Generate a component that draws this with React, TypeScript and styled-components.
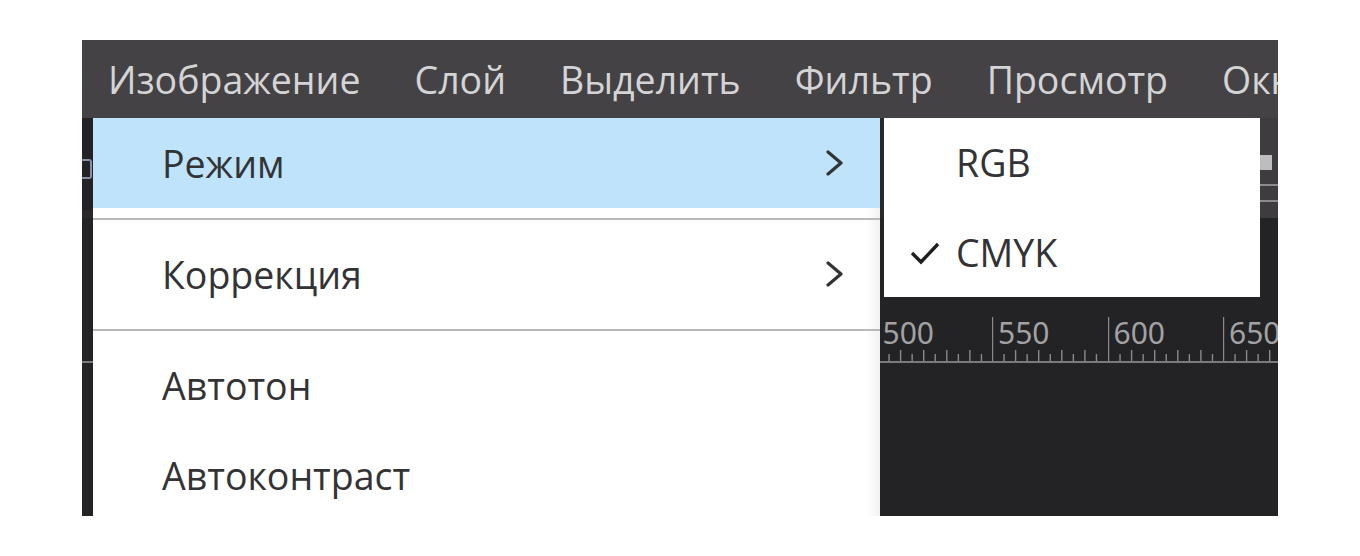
import React from 'react';
import styled, { createGlobalStyle } from 'styled-components';

const GlobalStyle = createGlobalStyle`
	html, body {
		margin: 0;
		padding: 0;
		background: #ffffff;
	}
	body {
		font-family: 'Open Sans', 'Noto Sans', sans-serif;
	}
`;

const menuBarItems = ['Изображение', 'Слой', 'Выделить', 'Фильтр', 'Просмотр', 'Окно'];

// Only the part of the ruler right of the open menu is visible
const rulerValues = [500, 550, 600, 650];
const RULER_STEP = 115.5;
const RULER_ORIGIN = 794.5;

const Chevron = () => (
	<svg width="20" height="26" viewBox="0 0 20 26" fill="none">
		<polyline points="3,2 16,13 3,24" stroke="#333" strokeWidth="3.2" strokeLinecap="round" strokeLinejoin="round" />
	</svg>
);

const Check = () => (
	<svg width="30" height="24" viewBox="0 0 30 24" fill="none">
		<polyline points="2,12 11,21 28,3" stroke="#1e1e1e" strokeWidth="3.4" strokeLinejoin="miter" />
	</svg>
);

const RulerTicks = () => (
	<svg width={RULER_STEP} height="44" viewBox={`0 0 ${RULER_STEP} 44`}>
		<line x1="0.5" y1="0" x2="0.5" y2="44" stroke="#8a8a8c" strokeWidth="1.4" />
		{Array.from({ length: 9 }).map((_, i) => {
			const x = (i + 1) * (RULER_STEP / 10) + 0.5;
			const h = i % 2 === 0 ? 7 : 11;
			return <line key={i} x1={x} y1={44 - h} x2={x} y2="44" stroke="#8a8a8c" strokeWidth="1.4" />;
		})}
	</svg>
);

const App = () => {
	return (
		<>
			<GlobalStyle />
			<Window>
				<MenuBar>
					{menuBarItems.map((item) => (
						<MenuBarItem key={item}>{item}</MenuBarItem>
					))}
				</MenuBar>

				<Toolbar>
					<ToolStrip>
						<ToolIcon />
					</ToolStrip>
					<ToolOptions>
						<OptionSwatch />
						<OptionLine />
						<OptionLine />
					</ToolOptions>
				</Toolbar>

				<RulerRow>
					{rulerValues.map((value) => (
						<RulerSegment key={value}>
							<RulerLabel>{value}</RulerLabel>
							<RulerTicks />
						</RulerSegment>
					))}
				</RulerRow>

				<Dropdown>
					<MenuItem $active>
						<span>Режим</span>
						<Chevron />
					</MenuItem>
					<Separator />
					<MenuItem>
						<span>Коррекция</span>
						<Chevron />
					</MenuItem>
					<Separator />
					<MenuItem>
						<span>Автотон</span>
					</MenuItem>
					<MenuItem>
						<span>Автоконтраст</span>
					</MenuItem>
				</Dropdown>

				<SubMenu>
					<SubMenuItem>
						<CheckSlot />
						<span>RGB</span>
					</SubMenuItem>
					<SubMenuItem>
						<CheckSlot>
							<Check />
						</CheckSlot>
						<span>CMYK</span>
					</SubMenuItem>
				</SubMenu>
			</Window>
		</>
	);
};

export default App;

const Window = styled.div`
	position: relative;
	margin: 40px 0 0 82px;
	width: 1196px;
	height: 476px;
	background: #232225;
	overflow: hidden;
	display: flex;
	flex-direction: column;
`;

const MenuBar = styled.div`
	display: flex;
	align-items: center;
	gap: 54px;
	height: 78px;
	padding-left: 26px;
	background: #444244;
	white-space: nowrap;
	flex-shrink: 0;
`;

const MenuBarItem = styled.div`
	font-size: 37.5px;
	color: #d4d4d6;
`;

const Toolbar = styled.div`
	display: flex;
	justify-content: space-between;
	height: 100px;
	background: #2a282b;
	flex-shrink: 0;
`;

const ToolStrip = styled.div`
	width: 11px;
	height: 92px;
	background: #242225;
	display: flex;
	align-items: center;
`;

const ToolIcon = styled.div`
	width: 8px;
	height: 16px;
	border: 2px solid #8a8fa8;
	border-left: none;
	border-radius: 0 3px 3px 0;
	margin-top: 10px;
`;

const ToolOptions = styled.div`
	width: 18px;
	background: #3e3c3e;
	display: flex;
	flex-direction: column;
	padding-top: 37px;
	gap: 3px;
`;

const OptionSwatch = styled.div`
	width: 12px;
	height: 15px;
	background: #bdbcbe;
`;

const OptionLine = styled.div`
	height: 2px;
	margin-top: 11px;
	background: #8c8a8c;
`;

const RulerRow = styled.div`
	display: flex;
	margin-top: 81px;
	padding-left: ${RULER_ORIGIN}px;
	height: 62px;
	border-bottom: 2px solid #7a7a7c;
	flex-shrink: 0;
`;

const RulerSegment = styled.div`
	position: relative;
	flex: 0 0 ${RULER_STEP}px;
	height: 62px;
	display: flex;
	flex-direction: column;
	justify-content: flex-end;
`;

const RulerLabel = styled.span`
	position: absolute;
	left: 6px;
	top: 17px;
	font-family: 'Noto Sans', sans-serif;
	font-size: 30px;
	line-height: 34px;
	color: #a2a2a4;
`;

const Dropdown = styled.div`
	position: absolute;
	left: 11px;
	top: 78px;
	width: 787px;
	height: 420px;
	background: #ffffff;
	box-shadow: inset -14px 0 14px -10px rgba(0, 0, 0, 0.08);
	display: flex;
	flex-direction: column;
`;

const MenuItem = styled.div<{ $active?: boolean }>`
	display: flex;
	align-items: center;
	justify-content: space-between;
	height: 90px;
	padding: 0 35px 0 69px;
	font-size: 37.5px;
	color: #333336;
	background: ${({ $active }) => ($active ? '#bee3fa' : 'transparent')};
	flex-shrink: 0;
`;

const Separator = styled.div`
	height: 2px;
	margin: 10px 0 9px;
	background: #b8b8ba;
	flex-shrink: 0;
`;

const SubMenu = styled.div`
	position: absolute;
	left: 802px;
	top: 78px;
	width: 376px;
	background: #ffffff;
	display: flex;
	flex-direction: column;
`;

const SubMenuItem = styled.div`
	display: flex;
	align-items: center;
	height: 89.5px;
	padding-left: 26px;
	font-size: 37.5px;
	color: #333336;
`;

const CheckSlot = styled.div`
	width: 46px;
	display: flex;
	align-items: center;
	padding-top: 2px;
`;
